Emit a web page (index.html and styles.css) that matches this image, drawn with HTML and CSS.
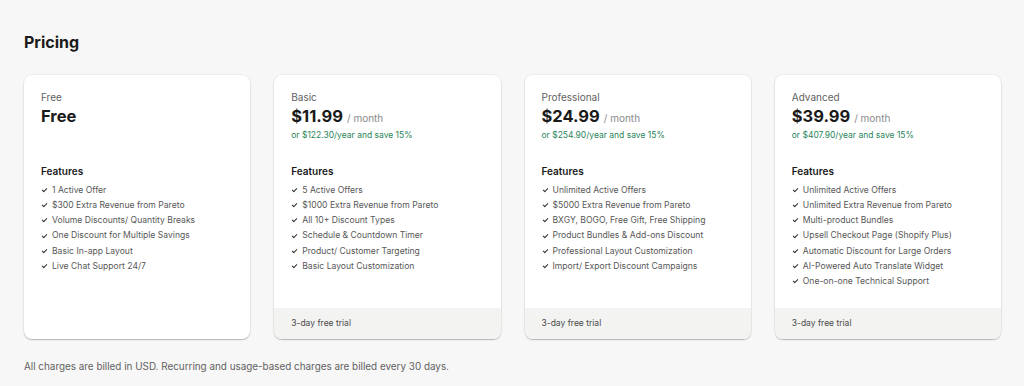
FILE: index.html
```html
<!DOCTYPE html>
<html lang="en">
<head>
  <meta charset="UTF-8" />
  <meta name="viewport" content="width=device-width, initial-scale=1.0" />
  <title>Pricing</title>
  <link rel="stylesheet" href="styles.css">
</head>
<body>
  <div class="page">
    <h1 class="page-title">Pricing</h1>

    <div class="plans">
      <div class="plan">
        <div class="plan-body">
          <div class="plan-name">Free</div>
          <div class="plan-price"><span class="amount">Free</span></div>
          <div class="plan-yearly"></div>
          <h3 class="features-title">Features</h3>
          <ul class="features">
            <li>1 Active Offer</li>
            <li>$300 Extra Revenue from Pareto</li>
            <li>Volume Discounts/ Quantity Breaks</li>
            <li>One Discount for Multiple Savings</li>
            <li>Basic In-app Layout</li>
            <li>Live Chat Support 24/7</li>
          </ul>
        </div>
      </div>

      <div class="plan">
        <div class="plan-body">
          <div class="plan-name">Basic</div>
          <div class="plan-price"><span class="amount">$11.99</span><span class="period">/ month</span></div>
          <div class="plan-yearly">or $122.30/year and save 15%</div>
          <h3 class="features-title">Features</h3>
          <ul class="features">
            <li>5 Active Offers</li>
            <li>$1000 Extra Revenue from Pareto</li>
            <li>All 10+ Discount Types</li>
            <li>Schedule &amp; Countdown Timer</li>
            <li>Product/ Customer Targeting</li>
            <li>Basic Layout Customization</li>
          </ul>
        </div>
        <div class="plan-trial">3-day free trial</div>
      </div>

      <div class="plan">
        <div class="plan-body">
          <div class="plan-name">Professional</div>
          <div class="plan-price"><span class="amount">$24.99</span><span class="period">/ month</span></div>
          <div class="plan-yearly">or $254.90/year and save 15%</div>
          <h3 class="features-title">Features</h3>
          <ul class="features">
            <li>Unlimited Active Offers</li>
            <li>$5000 Extra Revenue from Pareto</li>
            <li>BXGY, BOGO, Free Gift, Free Shipping</li>
            <li>Product Bundles &amp; Add-ons Discount</li>
            <li>Professional Layout Customization</li>
            <li>Import/ Export Discount Campaigns</li>
          </ul>
        </div>
        <div class="plan-trial">3-day free trial</div>
      </div>

      <div class="plan">
        <div class="plan-body">
          <div class="plan-name">Advanced</div>
          <div class="plan-price"><span class="amount">$39.99</span><span class="period">/ month</span></div>
          <div class="plan-yearly">or $407.90/year and save 15%</div>
          <h3 class="features-title">Features</h3>
          <ul class="features">
            <li>Unlimited Active Offers</li>
            <li>Unlimited Extra Revenue from Pareto</li>
            <li>Multi-product Bundles</li>
            <li>Upsell Checkout Page (Shopify Plus)</li>
            <li>Automatic Discount for Large Orders</li>
            <li>AI-Powered Auto Translate Widget</li>
            <li>One-on-one Technical Support</li>
          </ul>
        </div>
        <div class="plan-trial">3-day free trial</div>
      </div>
    </div>

    <p class="footnote">All charges are billed in USD. Recurring and usage-based charges are billed every 30 days.</p>
  </div>
</body>
</html>
```

FILE: styles.css
```css
body {
  margin: 0;
  font-family: 'Inter', 'Noto Sans', sans-serif;
  background: #f7f7f7;
  color: #303030;
}

.page {
  padding: 31px 23px 0 24px;
}

.page-title {
  margin: 0;
  font-size: 16px;
  line-height: 22px;
  font-weight: 700;
  color: #1a1a1a;
}

.plans {
  display: grid;
  grid-template-columns: repeat(4, 1fr);
  gap: 24px;
  margin-top: 22px;
}

.plan {
  display: flex;
  flex-direction: column;
  background: #ffffff;
  border-radius: 8px;
  overflow: hidden;
  box-shadow: 0 1px 1px rgba(0, 0, 0, 0.2), 0 1px 3px rgba(0, 0, 0, 0.06), 0 0 0 1px rgba(0, 0, 0, 0.03);
}

.plan-body {
  flex: 1;
  padding: 15px 17px 18px;
}

.plan-name {
  font-size: 10px;
  line-height: 14px;
  color: #616161;
}

.plan-price {
  display: flex;
  align-items: baseline;
  gap: 4px;
  height: 22px;
  margin-top: 1px;
  line-height: 22px;
}

.plan-price .amount {
  font-size: 16.5px;
  font-weight: 700;
  color: #1a1a1a;
}

.plan-price .period {
  font-size: 10px;
  color: #8a8a8a;
}

.plan-yearly {
  height: 14px;
  margin-top: 1px;
  font-size: 8.5px;
  line-height: 14px;
  color: #29845a;
}

.features-title {
  margin: 22px 0 0;
  font-size: 10px;
  line-height: 14px;
  font-weight: 600;
  color: #1a1a1a;
}

.features {
  list-style: none;
  margin: 4.5px 0 0;
  padding: 0;
}

.features li {
  display: flex;
  align-items: center;
  gap: 5px;
  font-size: 8.6px;
  line-height: 15.3px;
  color: #575757;
}

.features li::before {
  content: '';
  width: 4px;
  height: 2px;
  margin-left: 1px;
  margin-bottom: 2px;
  border-left: 1.3px solid #303030;
  border-bottom: 1.3px solid #303030;
  transform: rotate(-45deg);
}

.plan-trial {
  height: 31px;
  padding: 0 17px;
  background: #f3f3f2;
  font-size: 8.5px;
  line-height: 31px;
  color: #4a4a4a;
}

.footnote {
  margin: 20px 0 0;
  font-size: 9.9px;
  line-height: 14px;
  color: #616161;
}
```
